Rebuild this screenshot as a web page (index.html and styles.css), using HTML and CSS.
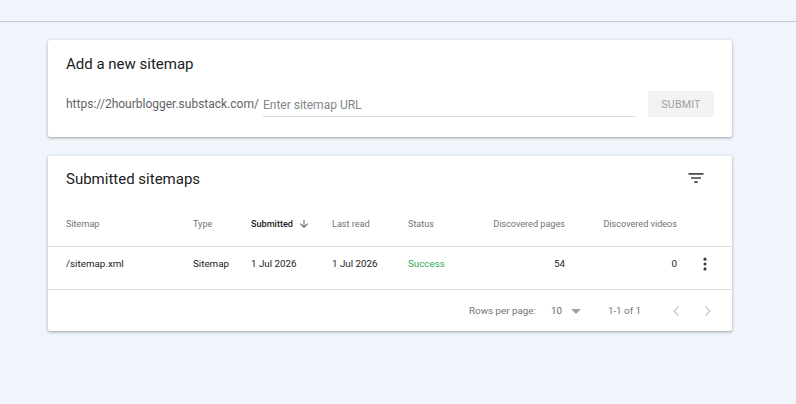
FILE: index.html
```html
<!DOCTYPE html>
<html>
<head>
<meta charset="utf-8">
<link rel="stylesheet" href="styles.css">
</head>
<body>
<div class="topbar"></div>
<main class="main">
  <section class="card add-card">
    <h2 class="card-title">Add a new sitemap</h2>
    <div class="add-row">
      <span class="prefix">https://2hourblogger.substack.com/</span>
      <div class="url-field"><span class="placeholder">Enter sitemap URL</span></div>
      <button class="submit">SUBMIT</button>
    </div>
  </section>

  <section class="card list-card">
    <div class="list-head">
      <h2 class="card-title">Submitted sitemaps</h2>
      <svg class="filter-icon" viewBox="0 0 24 24" width="20" height="20"><path d="M10 18h4v-2h-4v2zM3 6v2h18V6H3zm3 7h12v-2H6v2z" fill="#444746"/></svg>
    </div>
    <div class="row header-row">
      <div class="cell">Sitemap</div>
      <div class="cell">Type</div>
      <div class="cell sorted">Submitted<svg class="sort-arrow" viewBox="0 0 24 24" width="12" height="12"><path d="M20 12l-1.41-1.41L13 16.17V4h-2v12.17l-5.58-5.59L4 12l8 8 8-8z" fill="#5f6368"/></svg></div>
      <div class="cell">Last read</div>
      <div class="cell">Status</div>
      <div class="cell num">Discovered pages</div>
      <div class="cell num">Discovered videos</div>
      <div class="cell"></div>
    </div>
    <div class="row data-row">
      <div class="cell">/sitemap.xml</div>
      <div class="cell">Sitemap</div>
      <div class="cell">1 Jul 2026</div>
      <div class="cell">1 Jul 2026</div>
      <div class="cell success">Success</div>
      <div class="cell num">54</div>
      <div class="cell num">0</div>
      <div class="cell action"><svg viewBox="0 0 24 24" width="18" height="18"><circle cx="12" cy="5.5" r="2.1" fill="#3c4043"/><circle cx="12" cy="12" r="2.1" fill="#3c4043"/><circle cx="12" cy="18.5" r="2.1" fill="#3c4043"/></svg></div>
    </div>
    <div class="pager">
      <span class="rows-label">Rows per page:</span>
      <span class="rows-value">10</span>
      <svg class="drop" viewBox="0 0 24 24" width="24" height="24"><path d="M7 10l5 5 5-5z" fill="#9aa0a6"/></svg>
      <span class="range">1-1 of 1</span>
      <svg class="chev" viewBox="0 0 24 24" width="24" height="24"><path d="M14.5 7.5L10 12l4.5 4.5" fill="none" stroke="#c4c7c5" stroke-width="1.3"/></svg>
      <svg class="chev" viewBox="0 0 24 24" width="24" height="24"><path d="M9.5 7.5L14 12l-4.5 4.5" fill="none" stroke="#c4c7c5" stroke-width="1.3"/></svg>
    </div>
  </section>
</main>
</body>
</html>
```

FILE: styles.css
```css
* { box-sizing: border-box; }
html, body { margin: 0; padding: 0; }
body {
  background: #f0f4fb;
  font-family: Roboto, "Liberation Sans", Arial, sans-serif;
  color: #202124;
  width: 796px;
  height: 404px;
  overflow: hidden;
}
.topbar {
  height: 22px;
  border-bottom: 1px solid #c7c9cc;
}
.main {
  padding: 18px 64px 0 48px;
  display: flex;
  flex-direction: column;
  gap: 19px;
}
.card {
  background: #fff;
  border-radius: 2px;
  box-shadow: 0 1px 2px rgba(60,64,67,0.3), 0 1px 3px 1px rgba(60,64,67,0.12);
}
.card-title {
  margin: 0;
  font-size: 15px;
  font-weight: 400;
  line-height: 24px;
  color: #202124;
}
.add-card {
  height: 97px;
  padding: 12px 18px 20px 18px;
}
.add-row {
  margin-top: 15px;
  display: flex;
  align-items: stretch;
  height: 26px;
}
.prefix {
  font-size: 12px;
  color: #5f6368;
  line-height: 26px;
  margin-right: 4px;
}
.url-field {
  flex: 1;
  border-bottom: 1px solid #dadce0;
  font-size: 12px;
  line-height: 28px;
}
.placeholder { color: #80868b; }
.submit {
  margin-left: 12px;
  width: 66px;
  height: 26px;
  border: none;
  border-radius: 2px;
  background: #f3f3f3;
  color: #9e9e9e;
  font-family: Roboto, "Liberation Sans", Arial, sans-serif;
  font-size: 10.6px;
  letter-spacing: 0.2px;
  padding: 0;
}
.list-card { height: 175px; }
.list-head {
  height: 46px;
  padding: 11px 26px 11px 18px;
  display: flex;
  justify-content: space-between;
  align-items: flex-start;
}
.filter-icon { margin-top: 1px; }
.row {
  display: grid;
  grid-template-columns: 127px 58px 81px 76px 67px 90px 112px 1fr;
  padding-left: 18px;
  border-bottom: 1px solid #e0e0e0;
}
.header-row {
  height: 45px;
  align-items: center;
  color: #6f7377;
  font-size: 9.1px;
}
.cell { white-space: nowrap; }
.num { text-align: right; }
.sorted {
  color: #202124;
  font-weight: 500;
  display: flex;
  align-items: center;
}
.sort-arrow { margin-left: 5px; }
.data-row {
  height: 43px;
  padding-top: 8px;
  line-height: 18px;
  color: #202124;
  font-size: 9.8px;
}
.success { color: #34a853; }
.action {
  display: flex;
  justify-content: center;
  align-items: center;
  height: 18px;
}
.pager {
  height: 41px;
  display: flex;
  align-items: center;
  justify-content: flex-end;
  padding-right: 12px;
  font-size: 9.8px;
  color: #757575;
}
.rows-label { margin-right: 15px; }
.rows-value { color: #5f6368; margin-right: 2px; }
.range { margin-left: 20px; margin-right: 23px; }
.chev + .chev { margin-left: 8px; }
```
